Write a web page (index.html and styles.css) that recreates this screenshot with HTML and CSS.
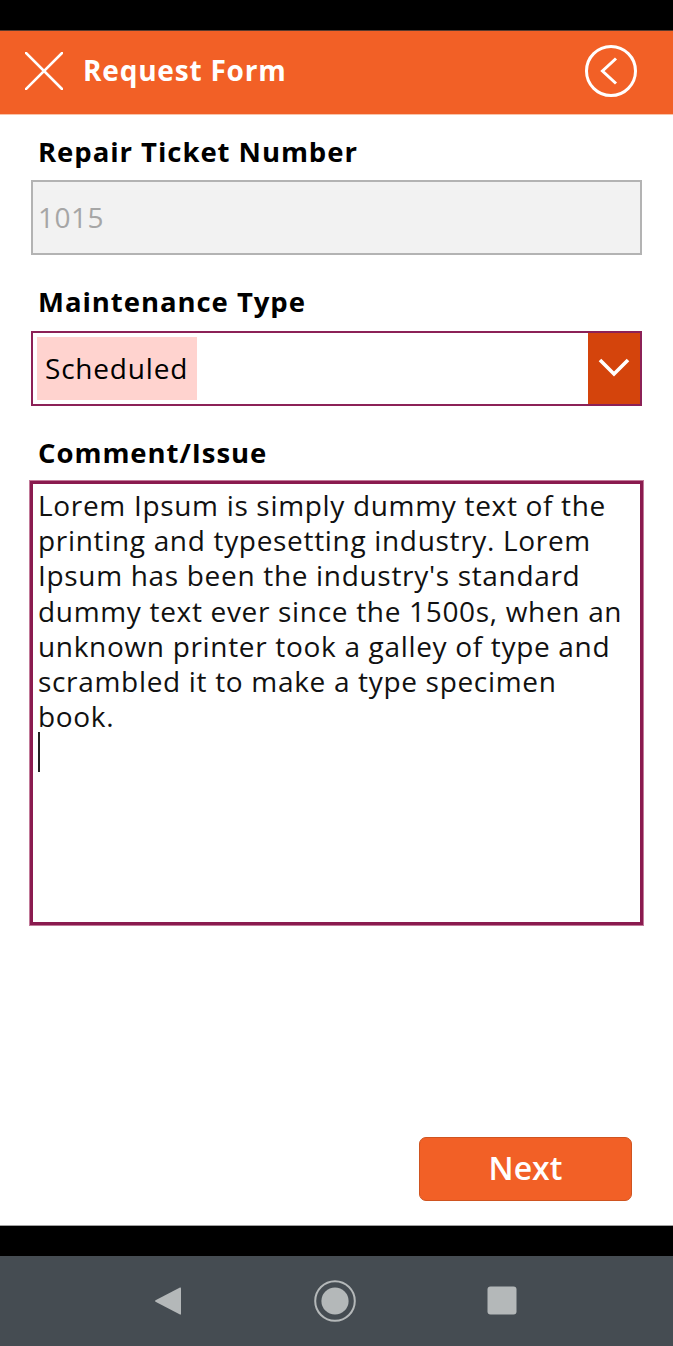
FILE: index.html
```html
<!DOCTYPE html>
<html lang="en">
<head>
<meta charset="utf-8">
<title>Request Form</title>
<link rel="stylesheet" href="styles.css">
</head>
<body>
<div class="screen">
  <div class="statusbar"></div>
  <header class="appbar">
    <svg class="close-icon" width="38" height="38" viewBox="0 0 38 38" aria-hidden="true">
      <path d="M1 1 L37 37 M37 1 L1 37" stroke="#fff" stroke-width="2.6" fill="none" stroke-linecap="square"/>
    </svg>
    <h1 class="title">Request Form</h1>
    <svg class="back-icon" width="54" height="54" viewBox="0 0 54 54" aria-hidden="true">
      <circle cx="27" cy="27" r="24.5" stroke="#fff" stroke-width="3" fill="none"/>
      <path d="M32 14.5 L18.5 27 L32 39.5" stroke="#fff" stroke-width="3" fill="none"/>
    </svg>
  </header>

  <main class="form">
    <div class="field">
      <label class="label">Repair Ticket Number</label>
      <div class="input input-disabled">1015</div>
    </div>
    <div class="field">
      <label class="label">Maintenance Type</label>
      <div class="select">
        <span class="select-value">Scheduled</span>
        <span class="select-btn">
          <svg width="32" height="20" viewBox="0 0 32 20" aria-hidden="true">
            <path d="M2 3 L16 17 L30 3" stroke="#fff" stroke-width="3.6" fill="none"/>
          </svg>
        </span>
      </div>
    </div>
    <div class="field">
      <label class="label">Comment/Issue</label>
      <div class="textarea">Lorem Ipsum is simply dummy text of the<br>printing and typesetting industry. Lorem<br>Ipsum has been the industry's standard<br>dummy text ever since the 1500s, when an<br>unknown printer took a galley of type and<br>scrambled it to make a type specimen<br>book.<br><span class="caret"></span></div>
    </div>
    <div class="actions">
      <button class="btn-next" type="button">Next</button>
    </div>
  </main>

  <div class="bottombar"></div>
  <nav class="navbar">
    <svg width="28" height="32" viewBox="0 0 28 32" aria-hidden="true">
      <path d="M26 2.5 Q27 2 27 3.5 L27 28.5 Q27 30 26 29.5 L1.5 16.8 Q0.5 16 1.5 15.2 Z" fill="#b4b8b9"/>
    </svg>
    <svg width="42" height="42" viewBox="0 0 42 42" aria-hidden="true">
      <circle cx="21" cy="21" r="19.8" stroke="#b4b8b9" stroke-width="2" fill="none"/>
      <circle cx="21" cy="21" r="13.6" fill="#b4b8b9"/>
    </svg>
    <svg width="30" height="30" viewBox="0 0 30 30" aria-hidden="true">
      <rect x="0.5" y="0.5" width="29" height="28" rx="3" fill="#b4b8b9"/>
    </svg>
  </nav>
</div>
</body>
</html>
```

FILE: styles.css
```css
* { box-sizing: border-box; }

html, body {
  margin: 0;
  padding: 0;
  background: #fff;
}

body {
  font-family: "Open Sans", "Noto Sans", "Liberation Sans", sans-serif;
  color: #000;
}

.screen {
  width: 673px;
  height: 1346px;
  display: flex;
  flex-direction: column;
  overflow: hidden;
}

.statusbar {
  height: 30px;
  background: #000;
  flex: none;
}

.appbar {
  height: 85px;
  flex: none;
  background: #f26026;
  border-top: 1px solid #5a3b2e;
  border-bottom: 1px solid #f9c3a8;
  display: flex;
  align-items: center;
  padding: 0 0 3px 25px;
}

.close-icon { flex: none; }

.title {
  margin: 0 0 0 20px;
  font-size: 28px;
  font-weight: 700;
  color: #fff;
  flex: 1;
  letter-spacing: 0.8px;
  line-height: 1;
  padding-bottom: 3px;
}

.back-icon { flex: none; margin-right: 35px; }

.form {
  flex: 1;
  display: flex;
  flex-direction: column;
  padding: 19px 30px 0 30px;
}

.field {
  display: flex;
  flex-direction: column;
  margin-bottom: 29px;
}

.label {
  font-size: 27.5px;
  font-weight: 700;
  line-height: 36px;
  letter-spacing: 0.95px;
  padding-left: 8px;
  margin-bottom: 10px;
}

.input {
  height: 75px;
  margin: 0 1px;
  border: 2px solid #b3b3b3;
  background: #f2f2f2;
  color: #a6a6a6;
  font-size: 28px;
  letter-spacing: 0.5px;
  display: flex;
  align-items: center;
  padding-left: 5px;
  padding-bottom: 2px;
}

.select {
  height: 75px;
  margin: 1px 1px 0;
  border: 2px solid #8c2157;
  display: flex;
  align-items: stretch;
}

.select-value {
  margin: 4px 0 4px 4px;
  background: #ffd3cf;
  font-size: 28px;
  letter-spacing: 0.8px;
  padding: 0 9px 2px 8px;
  display: flex;
  align-items: center;
}

.select-btn {
  margin-left: auto;
  width: 52px;
  background: #d4440c;
  display: flex;
  align-items: center;
  justify-content: center;
  padding-bottom: 3px;
}

.textarea {
  height: 444px;
  border: 3px solid #8a1b4f;
  box-shadow: 0 0 0 1px #c27a99;
  padding: 4px 8px 0 5px;
  font-size: 28px;
  line-height: 35.2px;
  letter-spacing: 0.68px;
  white-space: nowrap;
  overflow: hidden;
  color: #111;
}

.caret {
  display: inline-block;
  width: 1.5px;
  height: 40px;
  background: #222;
  vertical-align: top;
  margin-top: -2px;
}

.actions {
  margin-top: auto;
  display: flex;
  justify-content: flex-end;
  padding: 0 11px 24px 0;
}

.btn-next {
  width: 213px;
  height: 64px;
  background: #f26026;
  border: 1px solid #cf5420;
  border-radius: 7px;
  color: #fff;
  font-family: "Open Sans", "Noto Sans", sans-serif;
  font-size: 32px;
  font-weight: 600;
  padding: 0 0 3px 0;
  cursor: pointer;
}

.bottombar {
  height: 31px;
  flex: none;
  background: #000;
  border-top: 1px solid #a0a0a0;
}

.navbar {
  height: 90px;
  flex: none;
  background: #454c52;
  display: flex;
  align-items: center;
  justify-content: space-between;
  padding: 0 156px 0 154px;
}
```
